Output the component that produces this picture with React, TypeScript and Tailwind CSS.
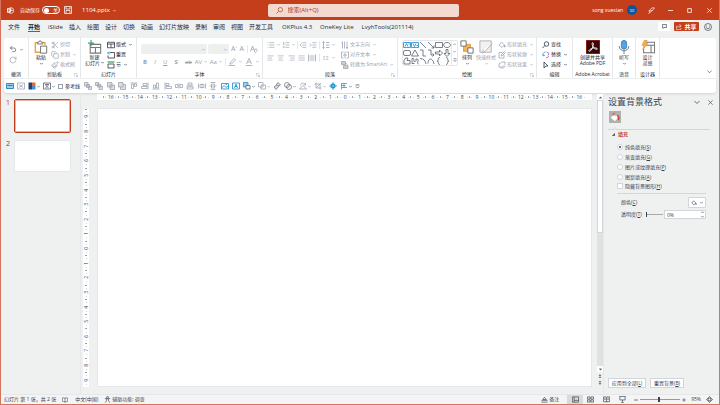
import type { ReactNode } from "react";
import {
  AlignCenter,
  AlignJustify,
  AlignLeft,
  AlignRight,
  BookOpen,
  Copy,
  IndentDecrease,
  IndentIncrease,
  List,
  ListOrdered,
  Paintbrush,
  RotateCw,
  Scissors,
  Undo2,
} from "lucide-react";

const tabs = ["文件", "开始", "iSlide", "插入", "绘图", "设计", "切换", "动画", "幻灯片放映", "录制", "审阅", "视图", "开发工具"];
const addins = ["OKPlus 4.3", "OneKey Lite", "LvyhTools(201114)"];

const Svg = ({ className = "size-2", children }: { className?: string; children: ReactNode }) => (
  <svg
    viewBox="0 0 16 16"
    className={`shrink-0 ${className}`}
    fill="none"
    stroke="currentColor"
    strokeWidth="1.5"
    aria-hidden="true"
  >
    {children}
  </svg>
);

const Caret = ({ className = "size-[3px]" }: { className?: string }) => (
  <Svg className={className}>
    <path d="M1 5l7 7 7-7" strokeWidth="3" />
  </Svg>
);

const Launcher = () => (
  <Svg className="size-1 text-gray-400">
    <path d="M1 14V1h13M6 6l8 8M14 8v6H8" strokeWidth="2" />
  </Svg>
);

const Group = ({
  label,
  className,
  launcher,
  children,
}: {
  label: string;
  className: string;
  launcher?: boolean;
  children: ReactNode;
}) => (
  <section className={`flex shrink-0 flex-col border-r border-gray-200 ${className}`}>
    <div className="flex h-[33px] items-center">{children}</div>
    <div className="relative text-center whitespace-nowrap text-gray-800">
      {label}
      {launcher && (
        <button aria-label={`${label}选项`} className="absolute right-[2px] bottom-[1px]">
          <Launcher />
        </button>
      )}
    </div>
  </section>
);

const SmallButton = ({
  icon,
  label,
  caret,
  disabled,
}: {
  icon: ReactNode;
  label: string;
  caret?: boolean;
  disabled?: boolean;
}) => (
  <button
    disabled={disabled}
    className={`flex h-[10px] items-center gap-[1px] whitespace-nowrap ${disabled ? "text-gray-400" : "text-gray-800"}`}
  >
    {icon}
    {label}
    {caret && <Caret className="ml-[2px] size-[3px]" />}
  </button>
);

const BigButton = ({
  icon,
  lines,
  caret,
  disabled,
}: {
  icon: ReactNode;
  lines: string[];
  caret?: boolean;
  disabled?: boolean;
}) => (
  <button
    disabled={disabled}
    className={`flex h-[30px] flex-col items-center whitespace-nowrap ${disabled ? "text-gray-400" : "text-gray-800"}`}
  >
    {icon}
    {lines.map((line) => (
      <span key={line} className="leading-[6px]">
        {line}
      </span>
    ))}
    {caret && <Caret className="mt-[2px] size-[3px]" />}
  </button>
);

const PasteIcon = () => (
  <Svg className="size-[14px]">
    <path d="M4 3H1.5v11H7M10 3h2.500v3" stroke="#e8a33d" />
    <path d="M4 4.5v-2h1.500a1.500 1.500 0 0 1 3 0H10v2z" fill="#fff" stroke="#666" strokeWidth="1" />
    <path d="M7.500 7h7v8h-7z" fill="#fff" stroke="#666" strokeWidth="1" />
  </Svg>
);

const NewSlideIcon = () => (
  <Svg className="size-[14px]">
    <path d="M2.5 5h12v10h-12zM2.5 8.500h12M8.500 8.500V15" stroke="#777" strokeWidth="1.2" />
    <path d="M3.5 0v7M0 3.5h7" stroke="#3c9d6b" strokeWidth="1.3" />
  </Svg>
);

const ArrangeIcon = () => (
  <Svg className="size-[14px]">
    <path d="M4 5h8v8H4z" fill="#f2b659" stroke="#e2973a" strokeWidth="1" />
    <path d="M1 1h6v6H1zM9 9h6v6H9z" fill="#fff" stroke="#666" strokeWidth="1" />
  </Svg>
);

const StyleIcon = () => (
  <Svg className="size-[14px]">
    <path d="M1 1h13v13H1z" fill="#f1f1f1" stroke="#aaa" strokeWidth="1" />
    <path d="M15 4L8 12l-4 3 1-4" fill="#fff" stroke="#aaa" strokeWidth="1" />
  </Svg>
);

const AcrobatIcon = () => (
  <Svg className="size-[14px]">
    <path d="M0 0h16v16H0z" fill="#3a0605" stroke="#d5402c" strokeWidth="1" />
    <path
      d="M7.5 3c1.5 0 1 3 .2 5-1 2.5-2.500 5-4 5-1.500-.5 1-3 4-3.700 2.500-.5 5.300-.4 5.300.9-.2 1.300-3 .1-4.600-2C7 6.500 6.500 3 7.500 3z"
      stroke="#fff"
      strokeWidth="1"
    />
  </Svg>
);

const MicIcon = () => (
  <Svg className="size-[14px]">
    <rect x="5" y="0.5" width="6" height="10" rx="3" fill="#5aa2dd" stroke="#2f7fc4" strokeWidth="1" />
    <path d="M2.5 7c0 7 11 7 11 0M8 12.500V16" stroke="#777" strokeWidth="1.1" />
  </Svg>
);

const DesignerIcon = () => (
  <Svg className="size-[14px]">
    <path d="M4 2.5h11.500v12H3v-5M3 6h12.500M11.500 6v8.500" stroke="#777" strokeWidth="1.2" />
    <path d="M4 0h3L5.500 4H8L2 11l1.500-5H1z" fill="#f5b04c" stroke="#e8912d" strokeWidth=".7" />
  </Svg>
);

const LayoutIcon = () => (
  <Svg>
    <path d="M1 2.5h14v11H1zM1 6h14M8 6v7" />
  </Svg>
);

const ResetIcon = () => (
  <Svg>
    <path d="M6 3h9v11H2V9" />
    <path d="M1 4h6M4 1L1 4l3 3" stroke="#2b88c8" />
  </Svg>
);

const SectionIcon = () => (
  <Svg>
    <path d="M1 2h14" stroke="#3c9d6b" strokeWidth="2.5" />
    <path d="M2 6h12v8H2z" />
  </Svg>
);

const BucketIcon = ({ color = "currentColor", className = "size-2" }: { color?: string; className?: string }) => (
  <Svg className={className}>
    <path d="M7 2l6 6-5 5-6-5z" />
    <path d="M13 8c2 2.500 2 4 .5 4S12 10.500 13 8z" fill={color} stroke={color} />
  </Svg>
);

const OutlineIcon = () => (
  <Svg>
    <path d="M12 8v6H2V3h7M6 10l1-3 6-6 2 2-6 6z" />
  </Svg>
);

const EffectIcon = () => (
  <Svg>
    <path d="M2 6l6-4h6v5l-5 5H2zM5 14h6l4-4" />
  </Svg>
);

const UndoGroup = () => (
  <Group label="撤消" className="w-[25px]">
    <div className="flex flex-col gap-[3px] pl-[5px]">
      <button aria-label="撤消" className="flex items-center gap-[3px] text-gray-600">
        <Undo2 className="size-2" />
        <Caret />
      </button>
      <button aria-label="重复" disabled className="text-gray-400">
        <RotateCw className="size-2" />
      </button>
    </div>
  </Group>
);

const ClipboardGroup = () => (
  <Group label="剪贴板" className="w-[52px]" launcher>
    <div className="flex gap-[3px] pl-[5px]">
      <BigButton icon={<PasteIcon />} lines={["粘贴"]} caret />
      <div>
        <SmallButton disabled icon={<Scissors className="size-2" />} label="剪切" />
        <SmallButton disabled icon={<Copy className="size-2" />} label="复制" caret />
        <SmallButton disabled icon={<Paintbrush className="size-2" />} label="格式刷" />
      </div>
    </div>
  </Group>
);

const SlidesGroup = () => (
  <Group label="幻灯片" className="w-14">
    <div className="flex gap-[3px] pl-[4px]">
      <button className="flex h-[30px] flex-col items-center whitespace-nowrap text-gray-800">
        <NewSlideIcon />
        <span className="leading-[6px]">新建</span>
        <span className="flex items-center gap-[1px] leading-[6px]">
          幻灯片
          <Caret />
        </span>
      </button>
      <div>
        <SmallButton icon={<LayoutIcon />} label="版式" caret />
        <SmallButton icon={<ResetIcon />} label="重置" />
        <SmallButton icon={<SectionIcon />} label="节" caret />
      </div>
    </div>
  </Group>
);

const FontSelect = ({ label, className }: { label: string; className: string }) => (
  <div className={`relative ${className}`}>
    <select aria-label={label} disabled className="block h-[10px] w-full appearance-none rounded-[2px] bg-[#eef0ef]" />
    <Caret className="absolute top-1 right-[2px] size-[3px]" />
  </div>
);

const FontGroup = () => (
  <Group label="字体" className="w-[126px]" launcher>
    <div className="flex w-full flex-col gap-1 pr-[3px] pl-1 text-gray-400">
      <div className="flex items-center gap-[1px]">
        <FontSelect label="字体" className="w-[66px]" />
        <FontSelect label="字号" className="w-[21px]" />
        <div className="flex flex-1 items-center justify-around text-[7px] leading-[8px]">
          <button>A<sup className="text-[4px]">^</sup></button>
          <button>A<sup className="text-[4px]">ˇ</sup></button>
          <i className="h-2 w-px bg-gray-200" />
          <button aria-label="清除格式">
            <Svg className="size-2">
              <path d="M1 13L5 2l4 9M2.5 9h5M8 12l4-5 3 3-4 5z" />
            </Svg>
          </button>
        </div>
      </div>
      <div className="flex h-2 items-center justify-between pl-[2px] text-[6px] leading-[8px]">
        <div className="flex w-[49px] justify-between">
          <button className="font-bold">B</button>
          <button className="italic">I</button>
          <button className="underline">U</button>
          <button className="font-bold">S</button>
          <button className="line-through">ab</button>
        </div>
        <button className="flex items-center gap-[2px]">AV<Caret /></button>
        <button className="flex items-center gap-[2px]">Aa<Caret /></button>
        <i className="h-2 w-px bg-gray-200" />
        <button aria-label="突出显示" className="flex items-center gap-[3px]">
          <Svg>
            <path d="M4 10l8-9 3 3-8 8H4zM1 15h13" />
          </Svg>
          <Caret />
        </button>
        <button aria-label="字体颜色" className="flex items-center gap-[3px]">
          <Svg>
            <path d="M3 12L8 1l5 11M5 8h6M1 15h14" />
          </Svg>
          <Caret />
        </button>
      </div>
    </div>
  </Group>
);

const ParagraphGroup = () => (
  <Group label="段落" className="w-[135px]" launcher>
    <div className="flex w-full gap-[6px] pl-1 text-gray-400">
      <div className="flex w-[68px] flex-col gap-[5px] pt-[1px]">
        <div className="flex items-center justify-between">
          <List className="size-2" />
          <Caret />
          <ListOrdered className="size-2" />
          <Caret />
          <i className="h-2 w-px bg-gray-200" />
          <IndentDecrease className="size-2" />
          <IndentIncrease className="size-2" />
          <i className="h-2 w-px bg-gray-200" />
          <Svg>
            <path d="M3 1v14M1 4l2-3 2 3M1 12l2 3 2-3M8 3h7M8 8h7M8 13h7" />
          </Svg>
          <Caret />
        </div>
        <div className="flex items-center gap-[3px]">
          <AlignLeft className="size-2" />
          <AlignCenter className="size-2" />
          <AlignRight className="size-2" />
          <AlignJustify className="size-2" />
          <Svg>
            <path d="M1 1v14M15 1v14M3 4h10M3 8h10M3 12h10" />
          </Svg>
          <i className="h-2 w-px bg-gray-200" />
          <Svg className="size-[6px]">
            <path d="M1 4h5M1 8h5M1 12h5M9 4h5M9 8h5M9 12h5" />
          </Svg>
          <Caret />
        </div>
      </div>
      <div>
        <SmallButton
          disabled
          caret
          label="文字方向"
          icon={
            <Svg>
              <path d="M3 1v14M7 1v14M12 1v14M10 12l2 3 2-3M1 4h3" />
            </Svg>
          }
        />
        <SmallButton
          disabled
          caret
          label="对齐文本"
          icon={
            <Svg>
              <path d="M5 2H1v12h4M11 2h4v12h-4M4 8h8M8 1v14" />
            </Svg>
          }
        />
        <SmallButton
          disabled
          caret
          label="转换为 SmartArt"
          icon={
            <Svg>
              <path d="M1 1h8v6H1zM5 9h9v6H5zM9 4l4 3" fill="#ccc" />
            </Svg>
          }
        />
      </div>
    </div>
  </Group>
);

const shapes = [
  "M1 3h14v10H1zM4 11l3-6 3 6M11 6h3",
  "M1 3h14v10H1zM4 5l3 6 3-6M11 9h3",
  "M2 2l12 12",
  "M2 2l12 12M14 9v5H9",
  "M1 3h14v10H1z",
  "M8 3c9 0 9 10 0 10S-1 3 8 3z",
  "M4 3h8q3 0 3 3v4q0 3-3 3H4q-3 0-3-3V6q0-3 3-3z",
  "M8 2l7 12H1z",
  "M2 2h6v12h6",
  "M2 2h6v10h6M11 9l3 3-3 3",
  "M1 6h8V2l6 6-6 6v-4H1z",
  "M6 1h4v8h4l-6 6-6-6h4z",
  "M5 2h5l-2 5h6v7H2V7z",
  "M2 3c8-2 0 8 6 6s-2-6 4-5-2 9 3 10M2 3v10h5",
  "M2 3c7 0 11 4 12 11",
  "M2 13C3 0 12 2 14 14",
  "M10 1C4 1 9 8 4 8c5 0 0 7 6 7",
  "M6 1c6 0 1 7 6 7-5 0 0 7-6 7",
];

const DrawingGroup = () => (
  <Group label="绘图" className="w-[139px]" launcher>
    <div className="flex gap-[2px] pl-1">
      <div className="flex h-[26px] rounded-[2px] border border-gray-200">
        <div className="grid grid-cols-6 place-content-center">
          {shapes.map((d, i) => (
            <button key={d} aria-label={`形状 ${i + 1}`} className={i < 2 ? "text-sky-600" : "text-gray-600"}>
              <Svg>
                <path d={d} />
              </Svg>
            </button>
          ))}
        </div>
        <div className="flex w-[6px] flex-col items-center justify-around border-l border-gray-200 text-gray-500">
          <Caret className="size-[3px] rotate-180" />
          <Caret />
          <Svg className="size-1">
            <path d="M2 3h12M2 8l6 6 6-6" strokeWidth="3" />
          </Svg>
        </div>
      </div>
      <BigButton icon={<ArrangeIcon />} lines={["排列"]} caret />
      <BigButton icon={<StyleIcon />} lines={["快速样式"]} caret disabled />
      <div>
        <SmallButton disabled caret icon={<BucketIcon />} label="形状填充" />
        <SmallButton disabled caret icon={<OutlineIcon />} label="形状轮廓" />
        <SmallButton disabled caret icon={<EffectIcon />} label="形状效果" />
      </div>
    </div>
  </Group>
);

const EditGroup = () => (
  <Group label="编辑" className="w-9">
    <div className="pl-[5px]">
      <SmallButton
        label="查找"
        icon={
          <Svg>
            <circle cx="9" cy="6" r="4.5" />
            <path d="M6 9l-5 5" />
          </Svg>
        }
      />
      <SmallButton
        label="替换"
        caret
        icon={
          <Svg>
            <path d="M7 2a5 5 0 0 0-4 8M1 7l2 3 3-2" stroke="#2b88c8" />
            <path d="M9 2l5 3-2 4M8 14l6-3" stroke="#a24bb5" />
          </Svg>
        }
      />
      <SmallButton
        label="选择"
        caret
        icon={
          <Svg>
            <path d="M4 2l8 8H8l-4 4z" />
          </Svg>
        }
      />
    </div>
  </Group>
);

const Ribbon = () => (
  <div className="relative mx-[3px] flex h-10 rounded-t-[3px] bg-white">
    <UndoGroup />
    <ClipboardGroup />
    <SlidesGroup />
    <FontGroup />
    <ParagraphGroup />
    <DrawingGroup />
    <EditGroup />
    <Group label="Adobe Acrobat" className="w-10">
      <div className="mx-auto">
        <BigButton icon={<AcrobatIcon />} lines={["创建并共享", "Adobe PDF"]} />
      </div>
    </Group>
    <Group label="语音" className="w-[23px]">
      <div className="mx-auto">
        <BigButton icon={<MicIcon />} lines={["听写"]} caret />
      </div>
    </Group>
    <Group label="设计器" className="w-6">
      <div className="mx-auto">
        <BigButton icon={<DesignerIcon />} lines={["设计", "灵感"]} />
      </div>
    </Group>
    <button aria-label="折叠功能区" className="absolute right-1 bottom-1 text-gray-700">
      <Svg className="size-[5px]">
        <path d="M1 5l7 7 7-7" strokeWidth="2" />
      </Svg>
    </button>
  </div>
);

const arrangeTools = [
  "M1 1h7v7H1zM5 5h6v6H5zM9 9h6v6H9z",
  "M1 1h6v6H1zM5 4h6v6H5zM8 8h7v7H8z",
  "M1 1h9v9H1zM6 6h9v9H6z",
  "M1 1h9v9H1zM10 5h5v10H5v-5",
  "M1 2h14M3 4h4v9H3zM9 4h4v5H9z",
  "M14 1v14M4 3h8v4H4zM1 9h11v4H1z",
  "M1 14h14M3 6h4v6H3zM9 2h4v10H9z",
  "M2 1v14M4 3h6v4H4zM4 9h11v4H4z",
  "M8 3v10M1 5h5v6H1zM10 5h5v6h-5z",
  "M1 8h14M4 2h8v4H4zM2 10h12v4H2z",
  "M1 3v10M15 3v10M4 5h8v6H4zM8 3v10",
  "M3 1h10M3 15h10M5 4h6v8H5zM1 8h14",
];

const ToolIcon = ({
  d,
  fill,
  label,
  className = "text-gray-400",
}: {
  d: string;
  fill?: string;
  label: string;
  className?: string;
}) => (
  <button aria-label={label} className={className}>
    <Svg>
      <path d={d} fill={fill} />
    </Svg>
  </button>
);

const QuickBar = () => (
  <div className="mx-[3px] mt-[1px] flex h-[14px] items-center rounded-b-[3px] bg-white pl-[2px] text-gray-600 shadow-sm">
    <div className="flex items-center gap-[3px]">
      <ToolIcon label="幻灯片" d="M1 3h14v10H1zM3 7h10" fill="#9ed0ee" className="text-sky-700" />
      <ToolIcon label="删除" d="M1 2h14v12H1zM4 5l8 6M12 5l-8 6" />
      <button aria-label="配色" className="flex items-center gap-[1px]">
        <Svg>
          <path d="M1 1h7v14H1z" fill="#26406b" stroke="none" />
          <path d="M8 1h7v7H8z" fill="#e9682b" stroke="none" />
          <path d="M8 8h7v7H8z" fill="#3f91d2" stroke="none" />
        </Svg>
        <Caret />
      </button>
      <button aria-label="文本" className="flex items-center gap-[1px]">
        <Svg>
          <path d="M1 2h14v12H1zM4 5h8M8 4v1M11 6l-6 6M5 6l6 6" />
        </Svg>
        <Caret />
      </button>
      <label className="flex items-center gap-[2px] whitespace-nowrap text-gray-800">
        <input type="checkbox" className="size-[5px] appearance-none border border-gray-400 bg-white" />
        参考线
      </label>
    </div>
    <div className="ml-1 flex w-[156px] items-center justify-between">
      {arrangeTools.map((d, i) => (
        <ToolIcon key={d} d={d} label={`排列 ${i + 1}`} fill={i < 4 ? "#ddd" : "none"} />
      ))}
      <ToolIcon label="图片" d="M1 3h14v11H1zM1 12l5-5 4 4 5-3M9 5h3" className="text-sky-600" />
      <ToolIcon label="文本框" d="M1 2h14v12H1zM5 12l3-8 3 8M6 9h4" className="text-sky-600" />
    </div>
    <div className="ml-[3px] flex items-center gap-[3px]">
      <button aria-label="形状" className="flex items-center gap-[1px]">
        <Svg>
          <path d="M1 1h9v9H1z" fill="#9ed0ee" stroke="#2b88c8" />
          <path d="M6 7h8v7H6z" fill="#fff" />
        </Svg>
        <Caret />
      </button>
      <button aria-label="合并形状" disabled className="flex items-center gap-[1px] text-gray-400">
        <Svg>
          <path d="M1 1h9v9H1zM6 6h9v8H6z" />
        </Svg>
        <Caret />
      </button>
      <ToolIcon label="格式刷" d="M10 1l5 5-4 2-4-3zM8 6l-6 4 4 5 6-7" fill="#ddd" className="text-gray-500" />
      <button aria-label="填充" className="flex items-center gap-[1px] text-gray-500">
        <Svg>
          <circle cx="6" cy="6" r="5" />
          <circle cx="10" cy="10" r="5" />
        </Svg>
        <Caret />
      </button>
      <button aria-label="旋转" disabled className="flex items-center gap-[1px] text-gray-400">
        <Svg>
          <path d="M1 14h14L8 7zM3 7c0-6 9-6 10-1M13 2v4H9" />
        </Svg>
        <Caret />
      </button>
      <button aria-label="裁剪" disabled className="flex items-center gap-[1px] text-gray-400">
        <Svg>
          <path d="M4 1v11h11M1 4h11v11M4 12L14 2" />
        </Svg>
        <Caret />
      </button>
      <ToolIcon label="移动" d="M8 1l3 4H5zM8 15l3-4H5zM1 8l4-3v6zM15 8l-4-3v6zM6 6h4v4H6z" className="text-sky-600" />
      <button aria-label="对齐" className="flex items-center gap-[1px]">
        <Svg className="size-2 text-sky-500">
          <path d="M3 15V2M3 3h11M3 7h8M3 11h11M8 2v10" />
        </Svg>
        <Caret />
      </button>
      <Svg className="size-[5px]">
        <path d="M2 3h12M3 8l5 5 5-5" strokeWidth="2.5" />
      </Svg>
    </div>
  </div>
);

const TitleBar = () => (
  <header className="flex h-5 shrink-0 items-center bg-[#c43e1c] px-[6px] text-white">
    <div className="flex flex-1 items-center">
      <Svg className="size-[7px]">
        <circle cx="9" cy="8" r="6.5" />
        <path d="M9 2v6h6" />
        <path d="M0 4h8v8H0z" fill="#fff" />
        <path d="M3 11V6h2q2 2-2 3" stroke="#c43e1c" />
      </Svg>
      <label className="ml-[6px] flex items-center gap-[2px] whitespace-nowrap">
        自动保存
        <input type="checkbox" role="switch" className="sr-only" />
        <span className="flex h-2 w-[18px] items-center justify-between rounded-full border border-white px-[1px] leading-[6px]">
          <i className="size-[5px] rounded-full bg-white" />关
        </span>
      </label>
      <button aria-label="保存" className="ml-1">
        <Svg>
          <path d="M1 1h14v14H1zM4 1v5h8V1M4 15V9h8v6" />
        </Svg>
      </button>
      <button className="ml-[10px] flex items-center gap-[3px] text-[6px]">
        1104.pptx
        <Caret />
      </button>
    </div>
    <label className="ml-[6px] flex h-[13px] w-[191px] items-center gap-[5px] rounded-[2px] bg-[#f4d9d1] pl-2 text-[#a93a1c]">
      <Svg className="size-[7px]">
        <circle cx="10" cy="6" r="5" />
        <path d="M6 10l-5 5" />
      </Svg>
      <input
        aria-label="搜索"
        placeholder="搜索(Alt+Q)"
        className="w-full bg-transparent text-[6px] leading-[8px] outline-none placeholder:text-[#a93a1c]"
      />
    </label>
    <div className="flex flex-1 items-center justify-end">
      <span>song xuexian</span>
      <span className="ml-1 flex size-[10px] items-center justify-center rounded-full bg-[#0f5499] text-[4px]">SX</span>
      <button aria-label="墨迹" className="ml-[11px]">
        <Svg className="size-[7px]">
          <path d="M2 9l7-7h6l-5 6zM2 9l2 4 6-5M1 15l3-2" />
        </Svg>
      </button>
      <button aria-label="最小化" className="ml-[13px]">
        <Svg className="size-[5px]">
          <path d="M0 8h16" strokeWidth="2.5" />
        </Svg>
      </button>
      <button aria-label="最大化" className="ml-[14px]">
        <Svg className="size-[5px]">
          <path d="M2 2h12v12H2z" strokeWidth="2.5" />
        </Svg>
      </button>
      <button aria-label="关闭" className="ml-[15px] mr-[1px]">
        <Svg className="size-[5px]">
          <path d="M1 1l14 14M15 1L1 15" strokeWidth="2.5" />
        </Svg>
      </button>
    </div>
  </header>
);

const TabBar = () => (
  <nav className="flex h-[18px] items-center px-[7px] pb-[5px] text-[6px] leading-[8px] whitespace-nowrap text-gray-800">
    <div className="flex items-center gap-[6px] pt-[2px]">
      {tabs.map((tab) => (
        <a
          key={tab}
          href="#"
          className={tab === "开始" ? "mx-[2px] border-b border-[#c43e1c] font-bold text-gray-900" : "border-b border-transparent"}
        >
          {tab}
        </a>
      ))}
    </div>
    <div className="ml-[9px] flex items-center gap-2 pt-[2px]">
      {addins.map((tab) => (
        <a key={tab} href="#" className="border-b border-transparent">
          {tab}
        </a>
      ))}
    </div>
    <div className="ml-auto flex items-center gap-1">
      <button aria-label="批注" className="flex h-[9px] w-3 items-center justify-center rounded-[1px] bg-white">
        <Svg className="size-[5px]">
          <path d="M1 2h14v9H7l-3 3v-3H1z" strokeWidth="2" />
        </Svg>
      </button>
      <button className="flex h-[9px] w-[25px] items-center justify-center gap-[2px] rounded-[1px] bg-[#c43e1c] font-bold text-white">
        <Svg className="size-[6px]">
          <path d="M5 6H1v9h12v-5M5 10q1-5 7-5M9 1l5 4-5 4" />
        </Svg>
        共享
      </button>
      <button aria-label="反馈" className="ml-[1px]">
        <Svg>
          <circle cx="8" cy="8" r="7" strokeWidth="1.2" />
          <path d="M4 9q4 5 8 0M5 5v2M11 5v2" strokeWidth="1.2" />
        </Svg>
      </button>
    </div>
  </nav>
);

const range = (n: number) => Array.from({ length: 2 * n + 1 }, (_, i) => Math.abs(n - i));

const HorizontalRuler = () => (
  <div className="flex h-[6px] items-center bg-white px-[6px] text-[5px] leading-[6px] text-gray-700">
    {range(16).map((n, i) => (
      <div key={i} className="flex flex-1 basis-0 items-center justify-between">
        <i className="h-[2px] w-px bg-gray-400" />
        <i className="size-px bg-gray-300" />
        <span className="flex w-[6px] justify-center">{n}</span>
        <i className="size-px bg-gray-300" />
        <i />
      </div>
    ))}
  </div>
);

const VerticalRuler = () => (
  <div className="flex w-[6px] flex-col items-center bg-white text-[5px] leading-[6px] text-gray-700">
    {range(9).map((n, i) => (
      <div key={i} className="flex flex-1 basis-0 flex-col items-center justify-between">
        <i className="h-px w-[2px] bg-gray-400" />
        <i className="size-px bg-gray-300" />
        <span className="rotate-180 [writing-mode:vertical-rl]">{n}</span>
        <i className="size-px bg-gray-300" />
        <i />
      </div>
    ))}
  </div>
);

const Thumbnails = () => (
  <aside className="flex w-20 shrink-0 flex-col gap-[7px] border-r border-gray-200 pt-[6px] pr-[9px] pl-[5px] text-[7px] leading-[8px]">
    {[1, 2].map((n) => (
      <a key={n} href="#" className="flex gap-1">
        <span className={n === 1 ? "w-1 text-[#c43e1c]" : "w-1 text-gray-600"}>{n}</span>
        <span
          className={
            n === 1
              ? "h-[34px] flex-1 rounded-[2px] border border-[#c43e1c] bg-white ring-1 ring-[#c43e1c]/40 ring-inset"
              : "h-8 flex-1 rounded-[2px] border border-gray-200 bg-white"
          }
        />
      </a>
    ))}
  </aside>
);

const ScrollBar = () => (
  <div className="flex w-[6px] shrink-0 flex-col text-gray-600">
    <button aria-label="向上滚动" className="flex h-[6px] items-center justify-center bg-white">
      <Svg className="size-[3px]">
        <path d="M1 12h14L8 4z" fill="currentColor" />
      </Svg>
    </button>
    <div className="flex-1 bg-[#e1e1e1]">
      <div className="h-1/2 border border-gray-300 bg-white" />
    </div>
    <button aria-label="向下滚动" className="flex h-[6px] items-center justify-center bg-white">
      <Svg className="size-[3px]">
        <path d="M1 4h14l-7 8z" fill="currentColor" />
      </Svg>
    </button>
    <button aria-label="上一张幻灯片" className="flex h-[7px] items-center justify-center">
      <Svg className="size-1">
        <path d="M2 7h12L8 1zM2 15h12L8 9z" fill="currentColor" stroke="none" />
      </Svg>
    </button>
    <button aria-label="下一张幻灯片" className="mb-[1px] flex h-[7px] items-center justify-center">
      <Svg className="size-1">
        <path d="M2 1h12L8 7zM2 9h12l-6 6z" fill="currentColor" stroke="none" />
      </Svg>
    </button>
  </div>
);

const Workspace = () => (
  <main className="flex min-w-0 flex-1 pt-[1px] pb-[7px] pl-[2px]">
    <div className="flex min-w-0 flex-1 gap-2">
      <div className="flex pt-[15px]">
        <VerticalRuler />
      </div>
      <div className="mr-[5px] flex min-w-0 flex-1 flex-col gap-2">
        <HorizontalRuler />
        <div className="flex-1 border border-gray-200 bg-white" />
      </div>
    </div>
    <ScrollBar />
  </main>
);

const fills = [
  ["纯色填充", "S"],
  ["渐变填充", "G"],
  ["图片或纹理填充", "P"],
  ["图案填充", "A"],
];

const FormatPane = () => (
  <aside className="flex w-[116px] shrink-0 flex-col border-l border-gray-200 pt-[3px] pr-[6px] pb-[6px] pl-1 text-gray-700">
    <div className="flex items-center justify-between">
      <h2 className="text-[9px] leading-[12px]">设置背景格式</h2>
      <div className="flex gap-2">
        <button aria-label="任务窗格选项">
          <Svg className="size-[6px]">
            <path d="M1 5l7 7 7-7" strokeWidth="2" />
          </Svg>
        </button>
        <button aria-label="关闭窗格">
          <Svg className="size-[5px]">
            <path d="M1 1l14 14M15 1L1 15" strokeWidth="2" />
          </Svg>
        </button>
      </div>
    </div>
    <button aria-label="填充与线条" className="mt-[3px] ml-[1px] flex size-3 items-center justify-center bg-[#b0b0b0]">
      <Svg className="size-[10px]">
        <path d="M7 3l6 5-5 6-6-5z" fill="#fff" stroke="#fff" />
        <path d="M5 6V3q2-2 3 0v3" stroke="#d24726" />
        <path d="M11 5q5 1 3 8-2-1-1-5z" fill="#d24726" stroke="#d24726" />
      </Svg>
    </button>
    <div className="relative mt-[6px] mr-[3px] border-t border-gray-300">
      <Svg className="absolute -top-1 left-[5px] size-1 text-gray-300">
        <path d="M1 14l7-9 7 9" fill="#eff1f0" strokeWidth="3" />
      </Svg>
    </div>
    <h3 className="mt-[1px] flex h-[7px] items-center gap-[3px] pl-1 font-bold text-[#c43e1c]">
      <Svg className="size-[3px] text-gray-700">
        <path d="M15 1v14H1z" fill="currentColor" />
      </Svg>
      填充
    </h3>
    <form className="mt-1 pr-[7px] pl-[9px]">
      {fills.map(([name, key], i) => (
        <label key={key} className="flex h-[10px] items-center gap-[2px]">
          <input
            type="radio"
            name="fill"
            defaultChecked={i === 0}
            className="flex size-[6px] appearance-none items-center justify-center rounded-full border border-gray-300 bg-white before:size-[2px] before:rounded-full checked:before:bg-gray-700"
          />
          <span>
            {name}(<u>{key}</u>)
          </span>
        </label>
      ))}
      <label className="flex h-2 items-center gap-[2px]">
        <input type="checkbox" className="size-[6px] appearance-none border border-gray-300 bg-white" />
        <span>
          隐藏背景图形(<u>H</u>)
        </span>
      </label>
      <div className="mt-[3px] border-t border-gray-300" />
      <div className="flex h-[14px] items-end justify-between pl-1">
        <span className="pb-[2px]">
          颜色(<u>C</u>)
        </span>
        <button
          aria-label="填充颜色"
          className="flex h-[11px] w-[18px] items-center justify-center gap-[3px] rounded-[1px] border border-gray-300 bg-white"
        >
          <BucketIcon color="#2b88c8" className="size-[6px]" />
          <Caret />
        </button>
      </div>
      <div className="mt-[2px] flex h-[9px] items-center pl-1">
        <label htmlFor="alpha" className="whitespace-nowrap">
          透明度(<u>T</u>)
        </label>
        <input
          aria-label="透明度滑块"
          type="range"
          defaultValue={0}
          className="ml-1 h-[6px] w-[17px] appearance-none bg-[linear-gradient(#aaa,#aaa)] bg-[length:100%_1px] bg-center bg-no-repeat [&::-webkit-slider-thumb]:h-[5px] [&::-webkit-slider-thumb]:w-px [&::-webkit-slider-thumb]:appearance-none [&::-webkit-slider-thumb]:bg-gray-700"
        />
        <div className="relative ml-auto w-[42px]">
          <input id="alpha" defaultValue="0%" className="block h-[9px] w-full border border-gray-300 bg-white px-[2px]" />
          <div className="absolute inset-y-0 right-[2px] flex flex-col justify-center gap-[1px]">
            <Caret className="size-[3px] rotate-180" />
            <Caret />
          </div>
        </div>
      </div>
    </form>
    <div className="mt-auto flex gap-1 whitespace-nowrap">
      <button className="h-[10px] w-[38px] border border-gray-300 bg-white">
        应用到全部(<u>L</u>)
      </button>
      <button className="h-[10px] w-[34px] border border-gray-300 bg-white">
        重置背景(<u>B</u>)
      </button>
    </div>
  </aside>
);

const StatusBar = () => (
  <footer className="flex h-[10px] shrink-0 items-center justify-between border-t border-gray-200 bg-[#f3f4f3] px-[3px] whitespace-nowrap text-gray-700">
    <div className="flex items-center">
      <span>幻灯片 第 1 张，共 2 张</span>
      <BookOpen className="ml-[6px] size-[6px]" />
      <span className="ml-[7px]">中文(中国)</span>
      <button className="ml-[6px] flex items-center gap-[1px]">
        <Svg className="size-[7px]">
          <circle cx="8" cy="3" r="2" />
          <path d="M2 6h12M6 6v4l-3 5M10 6v4l3 5" />
        </Svg>
        辅助功能: 调查
      </button>
    </div>
    <div className="flex items-center">
      <button className="flex items-center gap-[1px]">
        <Svg className="size-[7px]">
          <path d="M1 10h14M1 14h14M4 8l4-5 4 5z" />
        </Svg>
        备注
      </button>
      <button aria-label="普通视图" className="ml-2 flex h-[9px] w-4 items-center justify-center bg-[#dadada]">
        <Svg className="size-[7px]">
          <path d="M1 2h14v12H1zM5 2v12M5 10h10" />
        </Svg>
      </button>
      <button aria-label="幻灯片浏览" className="ml-1">
        <Svg className="size-[7px]">
          <path d="M1 2h6v5H1zM9 2h6v5H9zM1 9h6v5H1zM9 9h6v5H9z" />
        </Svg>
      </button>
      <button aria-label="阅读视图" className="ml-[9px]">
        <Svg className="size-[7px]">
          <path d="M1 2h6l1 1 1-1h6v11H9l-1 1-1-1H1zM8 3v11M3 5h3M3 8h3M10 5h3M10 8h3" />
        </Svg>
      </button>
      <button aria-label="幻灯片放映" className="ml-[9px]">
        <Svg className="size-[7px]">
          <path d="M1 1h14M2 1v8h12V1M8 9v5M5 15h6" />
        </Svg>
      </button>
      <button aria-label="缩小" className="ml-2">
        <Svg className="size-1">
          <path d="M1 8h14" strokeWidth="3" />
        </Svg>
      </button>
      <input
        aria-label="显示比例"
        type="range"
        defaultValue={48}
        className="mx-[2px] h-[6px] w-10 appearance-none bg-[linear-gradient(#999,#999)] bg-[length:100%_1px] bg-center bg-no-repeat [&::-webkit-slider-thumb]:h-[5px] [&::-webkit-slider-thumb]:w-[2px] [&::-webkit-slider-thumb]:appearance-none [&::-webkit-slider-thumb]:bg-gray-700"
      />
      <button aria-label="放大">
        <Svg className="size-1">
          <path d="M1 8h14M8 1v14" strokeWidth="2.5" />
        </Svg>
      </button>
      <span className="ml-[5px]">95%</span>
      <button aria-label="适应窗口" className="mr-[3px] ml-[5px]">
        <Svg className="size-[7px]">
          <path d="M8 1l3 4H5zM8 15l3-4H5zM1 8l4-3v6zM15 8l-4-3v6z" />
        </Svg>
      </button>
    </div>
  </footer>
);

export default function App() {
  return (
    <div className="flex h-screen flex-col overflow-hidden border-x border-b border-[#d4735e] bg-[#eff1f0] font-['Open_Sans','Noto_Sans_CJK_SC',sans-serif] text-[5px] leading-[7px]">
      <TitleBar />
      <TabBar />
      <Ribbon />
      <QuickBar />
      <div className="flex min-h-0 flex-1">
        <Thumbnails />
        <Workspace />
        <FormatPane />
      </div>
      <StatusBar />
    </div>
  );
}
